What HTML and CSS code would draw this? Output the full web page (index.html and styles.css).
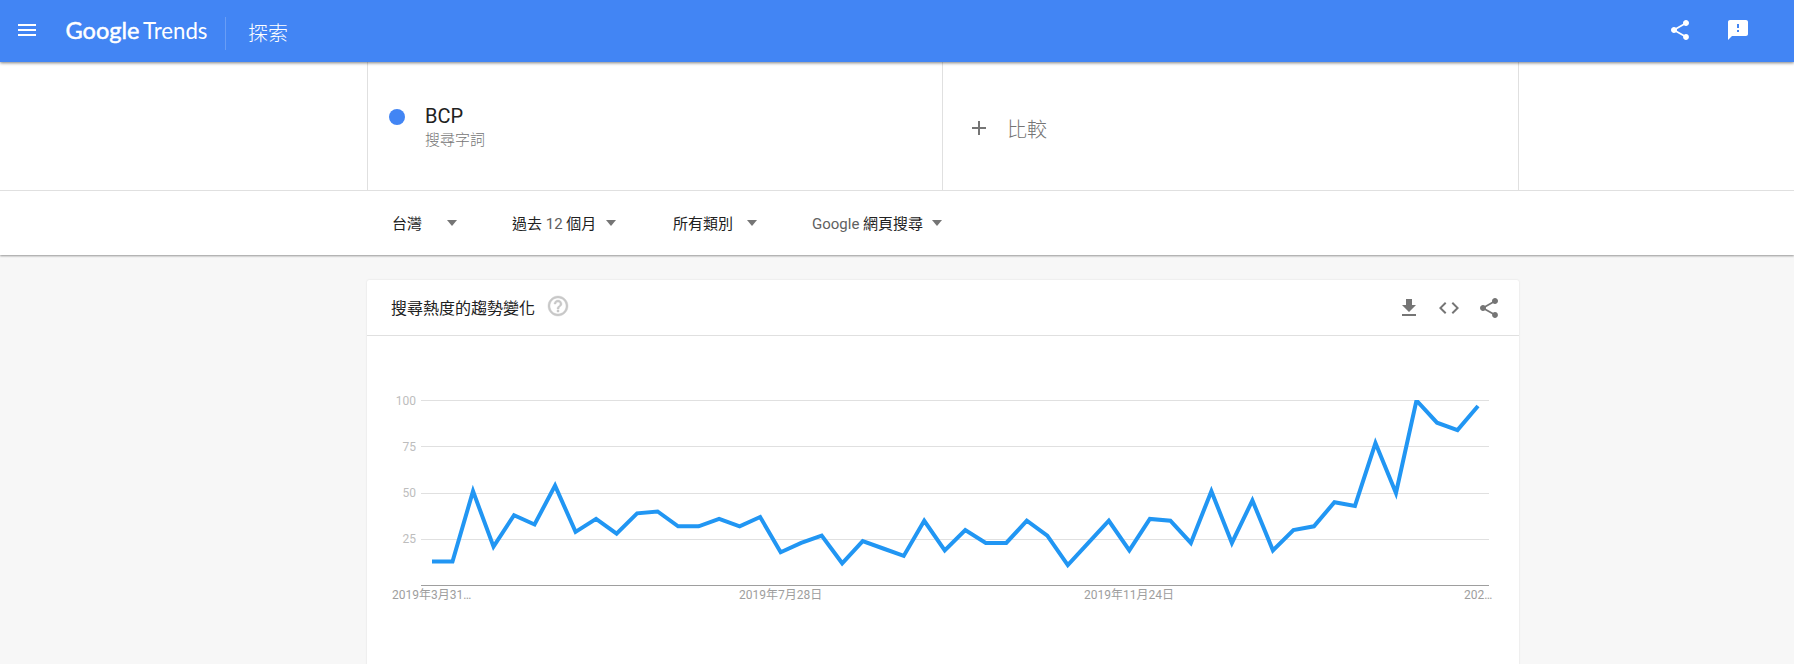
FILE: index.html
```html
<!DOCTYPE html>
<html lang="zh-Hant">
<head>
    <meta charset="UTF-8">
    <meta name="viewport" content="width=device-width, initial-scale=1.0">
    <title>BCP - 探索 - Google Trends</title>
    <link rel="stylesheet" href="styles.css">
</head>
<body>
    <!-- Top bar -->
    <header class="topbar">
        <svg class="icon menu-icon" viewBox="0 0 24 24"><path d="M3 18h18v-2H3v2zm0-5h18v-2H3v2zm0-7v2h18V6H3z"/></svg>
        <svg class="logo" width="144" height="32" viewBox="0 0 144 32">
            <text class="logo-google" x="-0.500" y="24" textLength="74" lengthAdjust="spacingAndGlyphs">Google</text>
            <text class="logo-trends" x="77" y="24" textLength="64.500" lengthAdjust="spacingAndGlyphs">Trends</text>
        </svg>
        <h1 class="page-name">探索</h1>
        <div class="topbar-actions">
            <svg class="icon" viewBox="0 0 24 24"><path d="M18 16.08c-.76 0-1.44.3-1.96.77L8.91 12.7c.05-.23.09-.46.09-.7s-.04-.47-.09-.7l7.05-4.11c.54.5 1.25.81 2.04.81 1.66 0 3-1.34 3-3s-1.34-3-3-3-3 1.34-3 3c0 .24.04.47.09.7L8.04 9.81C7.5 9.31 6.79 9 6 9c-1.66 0-3 1.34-3 3s1.34 3 3 3c.79 0 1.5-.31 2.04-.81l7.12 4.16c-.05.21-.08.43-.08.65 0 1.61 1.31 2.92 2.92 2.92s2.92-1.31 2.92-2.92-1.31-2.92-2.92-2.92z"/></svg>
            <svg class="icon" viewBox="0 0 24 24"><path d="M20 2H4c-1.100 0-1.990.9-1.990 2L2 22l4-4h14c1.100 0 2-.9 2-2V4c0-1.100-.9-2-2-2zm-7 12h-2v-2h2v2zm0-4h-2V6h2v4z"/></svg>
        </div>
    </header>

    <!-- Search terms and filters -->
    <section class="explore">
        <div class="terms-row">
            <div class="terms">
                <div class="term">
                    <span class="term-dot"></span>
                    <div class="term-text">
                        <div class="term-name">BCP</div>
                        <div class="term-type">搜尋字詞</div>
                    </div>
                </div>
                <div class="compare">
                    <svg class="icon" viewBox="0 0 24 24"><path d="M19 13h-6v6h-2v-6H5v-2h6V5h2v6h6v2z"/></svg>
                    <span>比較</span>
                </div>
            </div>
        </div>
        <div class="filters">
            <div class="filter filter-geo">台灣<i class="caret"></i></div>
            <div class="filter filter-time"><span>過去 <span class="latin">12</span> 個月</span><i class="caret"></i></div>
            <div class="filter filter-category">所有類別<i class="caret"></i></div>
            <div class="filter filter-property"><span><span class="latin">Google</span> 網頁搜尋</span><i class="caret"></i></div>
        </div>
    </section>

    <!-- Interest over time -->
    <main class="card">
        <div class="card-header">
            <h2>搜尋熱度的趨勢變化</h2>
            <svg class="icon help-icon" viewBox="0 0 24 24"><path d="M11 18h2v-2h-2v2zm1-16C6.480 2 2 6.480 2 12s4.480 10 10 10 10-4.480 10-10S17.520 2 12 2zm0 18c-4.410 0-8-3.590-8-8s3.590-8 8-8 8 3.590 8 8-3.590 8-8 8zm0-14c-2.210 0-4 1.790-4 4h2c0-1.100.9-2 2-2s2 .9 2 2c0 2-3 1.750-3 5h2c0-2.250 3-2.500 3-5 0-2.210-1.790-4-4-4z"/></svg>
            <div class="card-actions">
                <svg class="icon" viewBox="0 0 24 24"><path d="M19 9h-4V3H9v6H5l7 7 7-7zM5 18v2h14v-2H5z"/></svg>
                <svg class="icon" viewBox="0 0 24 24"><path d="M9.400 16.600L4.800 12l4.600-4.600L8 6l-6 6 6 6 1.400-1.400zm5.200 0l4.600-4.600-4.600-4.600L16 6l6 6-6 6-1.400-1.400z"/></svg>
                <svg class="icon" viewBox="0 0 24 24"><path d="M18 16.08c-.76 0-1.44.3-1.96.77L8.91 12.7c.05-.23.09-.46.09-.7s-.04-.47-.09-.7l7.05-4.11c.54.5 1.25.81 2.04.81 1.66 0 3-1.34 3-3s-1.34-3-3-3-3 1.34-3 3c0 .24.04.47.09.7L8.04 9.81C7.5 9.31 6.79 9 6 9c-1.66 0-3 1.34-3 3s1.34 3 3 3c.79 0 1.5-.31 2.04-.81l7.12 4.16c-.05.21-.08.43-.08.65 0 1.61 1.31 2.92 2.92 2.92s2.92-1.31 2.92-2.92-1.31-2.92-2.92-2.92z"/></svg>
            </div>
        </div>
        <svg class="chart" width="1152" height="328" viewBox="0 0 1152 328">
            <defs>
                <clipPath id="plot"><rect x="54" y="64" width="1068" height="186"/></clipPath>
            </defs>
            <g class="grid">
                <rect x="54" y="64" width="1068" height="1"/>
                <rect x="54" y="110" width="1068" height="1"/>
                <rect x="54" y="157" width="1068" height="1"/>
                <rect x="54" y="203" width="1068" height="1"/>
                <rect class="axis" x="54" y="249" width="1068" height="1"/>
            </g>
            <g class="y-labels">
                <text x="49" y="69">100</text>
                <text x="49" y="115">75</text>
                <text x="49" y="161">50</text>
                <text x="49" y="207">25</text>
            </g>
            <!-- points are week,value; the transform maps them onto the plot -->
            <g clip-path="url(#plot)">
                <polyline class="line" transform="translate(65 249.500) scale(20.510 -1.850)" points="0,13 1,13 2,51 3,21 4,38 5,33 6,54 7,29 8,36 9,28 10,39 11,40 12,32 13,32 14,36 15,32 16,37 17,18 18,23 19,27 20,12 21,24 22,20 23,16 24,35 25,19 26,30 27,23 28,23 29,35 30,27 31,11 32,23 33,35 34,19 35,36 36,35 37,23 38,51 39,23 40,46 41,19 42,30 43,32 44,45 45,43 46,77 47,50 48,100 49,88 50,84 51,97"/>
            </g>
            <g class="x-labels">
                <text x="25" y="263">2019年3月31…</text>
                <text x="372" y="263">2019年7月28日</text>
                <text x="717" y="263">2019年11月24日</text>
                <text x="1097" y="263">202…</text>
            </g>
        </svg>
    </main>
</body>
</html>
```
FILE: styles.css
```css
* {
    margin: 0;
    padding: 0;
    box-sizing: border-box;
}

body {
    font-family: Roboto, "Noto Sans CJK TC", sans-serif;
    background-color: #f7f7f7;
    color: #212121;
    height: 664px;
    overflow: hidden;
}

.icon {
    display: block;
    width: 24px;
    height: 24px;
    fill: currentColor;
    flex: none;
}

/* Top bar */
.topbar {
    position: relative;
    z-index: 1;
    display: flex;
    align-items: center;
    height: 62px;
    padding: 0 44px 0 15px;
    background-color: #4285f4;
    color: #fff;
    box-shadow: 0 1px 3px rgba(0, 0, 0, 0.5);
}

.menu-icon {
    margin-bottom: 2px;
}

.logo {
    margin-left: 27px;
    fill: #fff;
    overflow: visible;
}

.logo-google {
    font: 400 24px Lato, sans-serif;
    stroke: #fff;
    stroke-width: 0.5px;
}

.logo-trends {
    font: 400 24px Lato, sans-serif;
}

.page-name {
    height: 33px;
    margin: 4px 0 0 15px;
    padding-left: 22px;
    border-left: 1px solid #689df6;
    font-size: 20px;
    font-weight: 300;
    line-height: 34px;
}

.topbar-actions {
    display: flex;
    gap: 34px;
    margin: 0 0 2px auto;
}

/* Terms and filters */
.explore {
    height: 193px;
    background-color: #fff;
    box-shadow: 0 1px 2px rgba(0, 0, 0, 0.4);
}

.terms-row {
    height: 129px;
    border-bottom: 1px solid #e0e0e0;
}

.terms {
    display: flex;
    width: 1152px;
    height: 128px;
    margin-left: 367px;
    border-right: 1px solid #e0e0e0;
}

.term,
.compare {
    display: flex;
    border-left: 1px solid #e0e0e0;
}

.term {
    width: 575px;
    padding: 42px 0 0 21px;
}

.term-dot {
    width: 16px;
    height: 16px;
    margin-top: 5px;
    border-radius: 50%;
    background-color: #4285f4;
}

.term-text {
    margin-left: 20px;
}

.term-name {
    font-size: 20px;
    line-height: 24px;
}

.term-type {
    font-size: 15px;
    font-weight: 300;
    line-height: 24px;
    color: #757575;
}

.compare {
    flex: 1;
    align-items: center;
    padding: 5px 0 0 24px;
    font-size: 20px;
    font-weight: 300;
    color: #757575;
}

.compare .icon {
    margin-bottom: 1px;
}

.compare span {
    margin-left: 16px;
}

.filters {
    display: flex;
    align-items: center;
    height: 62px;
    padding-left: 392px;
    font-size: 15px;
}

.filter {
    display: flex;
    align-items: center;
    justify-content: space-between;
    white-space: nowrap;
}

.filter-geo {
    width: 65px;
}

.filter-time {
    width: 104px;
    margin-left: 55px;
}

.filter-category {
    width: 84px;
    margin-left: 57px;
}

.filter-property {
    width: 130px;
    margin-left: 55px;
}

.latin {
    color: #616161;
}

.caret {
    margin-top: 2px;
    border: 5px solid transparent;
    border-top: 6px solid #757575;
    border-bottom: 0;
}

/* Card */
.card {
    width: 1152px;
    height: 400px;
    margin: 25px 0 0 367px;
    border-radius: 2px;
    background-color: #fff;
    box-shadow: 0 0 2px rgba(0, 0, 0, 0.12);
}

.card-header {
    display: flex;
    align-items: center;
    height: 56px;
    padding: 0 18px 0 24px;
    border-bottom: 1px solid #e0e0e0;
}

.card-header h2 {
    margin-bottom: 2px;
    font-size: 16px;
    font-weight: 400;
}

.help-icon {
    margin: 0 0 3px 11px;
    color: #c8c8c8;
    stroke: currentColor;
    stroke-width: 0.4px;
}

.card-actions {
    display: flex;
    gap: 16px;
    margin-left: auto;
    color: #757575;
}

/* Chart */
.chart {
    display: block;
    font-size: 12px;
}

.grid {
    fill: #e0e0e0;
    shape-rendering: crispEdges;
}

.grid .axis {
    fill: #9e9e9e;
}

.line {
    fill: none;
    stroke: #2196f3;
    stroke-width: 4;
    stroke-miterlimit: 10;
    vector-effect: non-scaling-stroke;
}

.y-labels {
    fill: #bdbdbd;
    text-anchor: end;
}

.x-labels {
    fill: #9e9e9e;
}
```
